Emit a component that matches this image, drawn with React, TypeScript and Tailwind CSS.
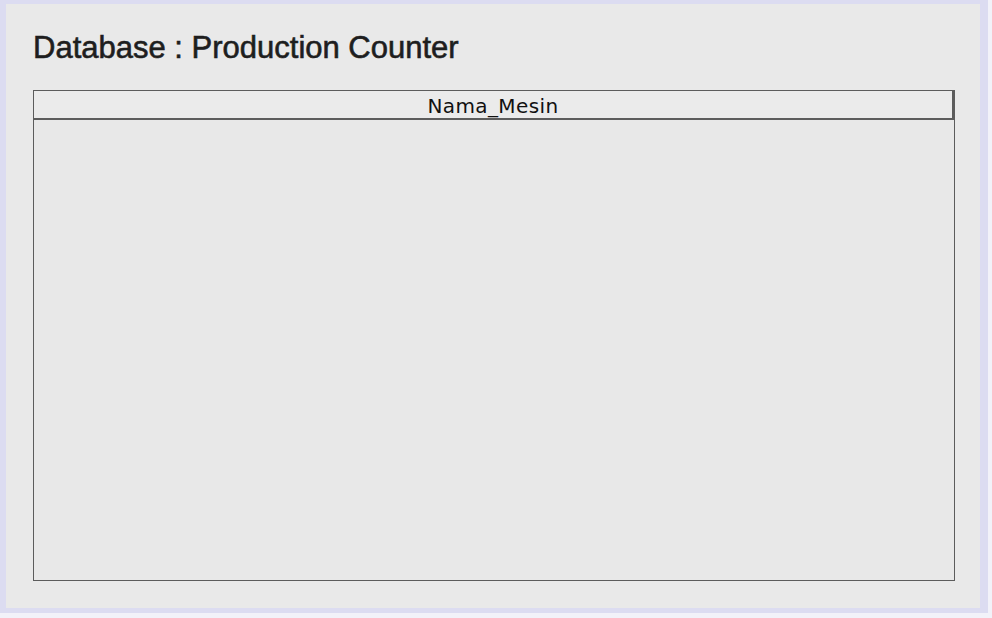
export default function App() {
  return (
    <div className="h-[618px] w-[992px] bg-[#f2f2f9] pb-[5px] pr-[4px]">
      <div className="h-full w-full bg-[#dcdcf1] pb-[5px] pl-[6px] pr-[8px] pt-[4px]">
        <div className="flex h-full flex-col bg-[#e9e9e9] pl-[27px] pr-[25px] pt-[26px] pb-[27px]">
          {/* Title */}
          <h1 className="h-[60px] font-['Liberation_Sans',Arial,sans-serif] text-[31px] leading-[36px] text-[#1e1e1e] [-webkit-text-stroke:0.6px_#1e1e1e]">
            Database : Production Counter
          </h1>

          {/* Table */}
          <div className="flex w-[922px] flex-1 flex-col border border-[#5c5c5c] bg-[#e8e8e8]">
            <div className="flex h-[29px] items-center justify-center border-b-2 border-r-2 border-[#5c5c5c] bg-[#ebebeb] pt-[2px] font-['DejaVu_Sans',sans-serif] text-[20px] tracking-[0.4px] text-[#111]">
              Nama_Mesin
            </div>
            <div className="flex-1" />
          </div>
        </div>
      </div>
    </div>
  )
}
